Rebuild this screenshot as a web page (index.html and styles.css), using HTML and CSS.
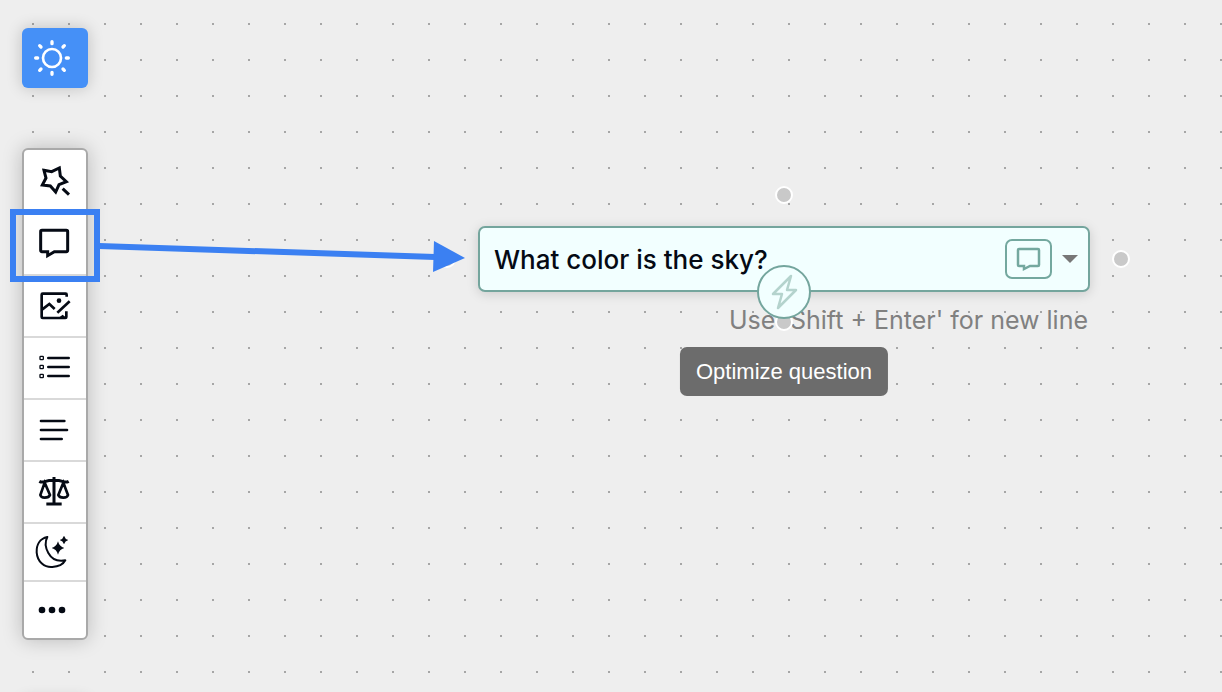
FILE: index.html
```html
<!DOCTYPE html>
<html lang="en">
<head>
<meta charset="utf-8">
<meta name="viewport" content="width=device-width, initial-scale=1">
<title>Question canvas</title>
<link rel="stylesheet" href="styles.css">
</head>
<body>
<main class="canvas">
  <aside class="dock">
    <button class="theme" type="button" aria-label="Light mode">
      <svg class="icon" viewBox="66 84 198 180" fill="none" stroke="#fff" stroke-width="8" stroke-linecap="round">
        <circle cx="156" cy="174" r="27"/>
        <path stroke-width="10" d="M156 125v6M156 217v6M107 174h6M199 174h6M119 137l4 4M189 207l4 4M119 211l4-4M189 141l4-4"/>
      </svg>
    </button>
    <nav class="tools" aria-label="Tools">
      <button class="tool" type="button" aria-label="Magic">
        <svg class="icon" viewBox="72 30 186 186" fill="none" stroke="#050a14" stroke-width="9">
          <path d="M132 91L155 95L178 84L181 108L199 125L177 134L167 156L151 138L127 135L138 114Z"/>
          <path d="M188 146l19 18"/>
        </svg>
      </button>
      <button class="tool" type="button" aria-label="Question">
        <svg class="icon" viewBox="72 222 186 180" fill="none" stroke="#050a14" stroke-width="9">
          <path d="M126 271H199Q203 271 203 275V331Q203 335 199 335H163L143 347V335H126Q122 335 122 331V275Q122 271 126 271Z"/>
        </svg>
      </button>
      <button class="tool" type="button" aria-label="Image">
        <svg class="icon" viewBox="72 -12 186 180" fill="none" stroke="#050a14" stroke-width="8">
          <path d="M200 50V44Q200 41 197 41H128Q125 41 125 44V111Q125 114 128 114H196Q199 114 199 111V94"/>
          <path d="M127 88L148 72L164 87"/>
          <path d="M172 98L209 64"/>
          <path fill="#050a14" stroke="none" d="M178 112L188 104L197 112Z"/>
          <circle cx="177" cy="62" r="7" fill="#050a14" stroke="none"/>
        </svg>
      </button>
      <button class="tool" type="button" aria-label="List">
        <svg class="icon" viewBox="72 174 186 180" fill="none" stroke="#050a14" stroke-width="4">
          <rect x="120" y="229" width="10" height="10" rx="2"/>
          <rect x="120" y="256" width="10" height="10" rx="2"/>
          <rect x="120" y="283" width="10" height="10" rx="2"/>
          <path stroke-width="8" stroke-linecap="round" d="M145 234h61M145 261h61M145 288h61"/>
        </svg>
      </button>
      <button class="tool" type="button" aria-label="Text">
        <svg class="icon" viewBox="72 360 186 180" fill="none" stroke="#050a14" stroke-width="8" stroke-linecap="round">
          <path d="M123 423h70M123 450h78M123 477h62"/>
        </svg>
      </button>
      <button class="tool" type="button" aria-label="Compare">
        <svg class="icon" viewBox="72 36 186 180" fill="none" stroke="#050a14" stroke-width="8">
          <path stroke-width="9" d="M162 81V162M139 162H185M118 94Q125 98 134 95Q151 90 162 91Q173 90 190 95Q199 98 206 94"/>
          <path d="M134 98L121 135Q123 143 134 143Q147 143 150 135ZM190 98L175 135Q178 143 190 143Q202 143 204 135Z"/>
        </svg>
      </button>
      <button class="tool short" type="button" aria-label="Night">
        <svg class="icon" viewBox="72 222 186 168" fill="none" stroke="#050a14" stroke-width="6" stroke-linejoin="round">
          <path d="M142 261C119 266 109 285 110 307C112 336 134 353 157 351C177 350 190 342 196 331C176 335 156 329 145 309C135 291 134 276 142 261Z"/>
          <path fill="#050a14" stroke="none" d="M174 274Q178 290 193 294Q178 298 174 314Q170 298 155 294Q170 290 174 274ZM192 257Q195 267 205 270Q195 273 192 283Q189 273 179 270Q189 267 192 257Z"/>
        </svg>
      </button>
      <button class="tool short" type="button" aria-label="More">
        <svg class="icon" viewBox="72 66 186 168" fill="#050a14">
          <circle cx="126" cy="150" r="10"/><circle cx="156" cy="150" r="10"/><circle cx="186" cy="150" r="10"/>
        </svg>
      </button>
    </nav>
    <button class="theme" type="button" aria-label="Zoom"></button>
  </aside>

  <section class="node" aria-label="Question node">
    <div class="card">
      <input class="question" type="text" aria-label="Question" value="What color is the sky?">
      <button class="kind" type="button" aria-label="Question type">
        <svg class="kind-icon" viewBox="0 0 26 24" fill="none" stroke="#74a89f" stroke-width="2.500">
          <path d="M3 2H22Q23 2 23 3V18Q23 19 22 19H14L8 22V19H3Q2 19 2 18V3Q2 2 3 2Z"/>
        </svg>
      </button>
      <button class="caret" type="button" aria-label="Change type">
        <svg class="caret-icon" viewBox="0 0 16 8" fill="#777"><path d="M0 0h16L8 8z"/></svg>
      </button>
    </div>
    <p class="hint">Use 'Shift + Enter' for new line</p>
    <span class="handle top"></span>
    <span class="handle right"></span>
    <span class="handle bottom"></span>
    <span class="handle left"></span>
    <button class="optimize" type="button" aria-describedby="tip" aria-label="Optimize">
      <svg class="bolt" viewBox="0 0 28 38" fill="none" stroke="#b4d3cd" stroke-width="2.500" stroke-linejoin="round">
        <path d="M21 3L3 21H12L8 35L26 17H17Z"/>
      </svg>
    </button>
    <div class="tooltip" id="tip" role="tooltip">Optimize question</div>
  </section>

  <div class="highlight"></div>
  <svg class="arrow" viewBox="0 0 366 36" aria-hidden="true">
    <path d="M0 9L336 20" stroke="#3b80f2" stroke-width="6"/>
    <path d="M335 4L366 21L334 35Z" fill="#3b80f2"/>
  </svg>
</main>
</body>
</html>
```
FILE: styles.css
```css
* {
  box-sizing: border-box;
}

body {
  margin: 0;
  font-family: Inter, "Liberation Sans", sans-serif;
  color: #050a14;
}

button {
  padding: 0;
  border: 0;
  background: none;
  cursor: pointer;
}

svg {
  display: block;
}

.canvas {
  position: relative;
  height: 100vh;
  overflow: hidden;
  background-color: #eee;
  background-image: linear-gradient(#eee 34px, transparent 34px), linear-gradient(90deg, #a6a6a6 2px, #eee 2px);
  background-size: 36px 36px;
  background-position: 32px 25px;
}

.dock {
  display: flex;
  flex-direction: column;
  gap: 60px;
  width: 88px;
  padding: 28px 0 0 22px;
}

.theme {
  flex: none;
  height: 60px;
  border-radius: 6px;
  background: #4590f7;
  box-shadow: 0 0 16px rgba(0, 0, 0, 0.2);
}

.icon {
  width: 100%;
  height: 100%;
}

.tools {
  display: flex;
  flex-direction: column;
  border: 2px solid #a9a9a9;
  border-radius: 6px;
  overflow: hidden;
  background: #fff;
  box-shadow: 0 0 20px rgba(0, 0, 0, 0.22);
}

.tool {
  height: 62px;
  border-bottom: 2px solid #d9d9d9;
}

.tool:first-child {
  height: 64px;
}

.tool.short {
  height: 58px;
}

.tool.short:last-child {
  height: 56px;
  border-bottom: 0;
}

.node {
  position: absolute;
  left: 478px;
  top: 226px;
  width: 612px;
}

.card {
  display: flex;
  align-items: center;
  height: 66px;
  padding: 0 10px 0 14px;
  border: 2px solid #74a59d;
  border-radius: 7px;
  background: #f2ffff;
  box-shadow: 0 2px 12px rgba(0, 0, 0, 0.15);
}

.question {
  flex: 1;
  min-width: 0;
  padding: 2px 0 0;
  border: 0;
  outline: 0;
  background: none;
  font: 500 26px/32px Inter, sans-serif;
  color: inherit;
}

.kind {
  display: grid;
  place-items: center;
  width: 47px;
  height: 40px;
  border: 2px solid #74a89f;
  border-radius: 7px;
}

.kind-icon {
  width: 26px;
  height: 24px;
}

.caret {
  margin-left: 10px;
}

.caret-icon {
  width: 16px;
  height: 8px;
}

.hint {
  margin: 12px 2px 0 0;
  text-align: right;
  font-size: 25px;
  line-height: 32px;
  color: #808080;
}

.handle {
  position: absolute;
  width: 18px;
  height: 18px;
  border: 2px solid #fff;
  border-radius: 50%;
  background: #c9c9c9;
}

.handle.top {
  left: 297px;
  top: -40px;
}

.handle.right {
  right: -40px;
  top: 24px;
}

.handle.bottom {
  left: 297px;
  top: 87px;
}

.handle.left {
  left: -40px;
  top: 24px;
}

.optimize {
  position: absolute;
  left: 279px;
  top: 39px;
  display: grid;
  place-items: center;
  width: 54px;
  height: 54px;
  border: 2px solid #74a59d;
  border-radius: 50%;
  background: #f2ffff;
}

.bolt {
  width: 28px;
  height: 38px;
}

.tooltip {
  position: absolute;
  left: 50%;
  top: 121px;
  translate: -50% 0;
  padding: 12px 16px;
  border-radius: 7px;
  background: #6c6c6c;
  font: 22px/25px "Liberation Sans", sans-serif;
  white-space: nowrap;
  color: #fff;
}

.highlight {
  position: absolute;
  left: 10px;
  top: 209px;
  width: 90px;
  height: 73px;
  border: 6px solid #3b80f2;
  pointer-events: none;
}

.arrow {
  position: absolute;
  left: 99px;
  top: 237px;
  width: 366px;
  height: 36px;
  pointer-events: none;
}
```
